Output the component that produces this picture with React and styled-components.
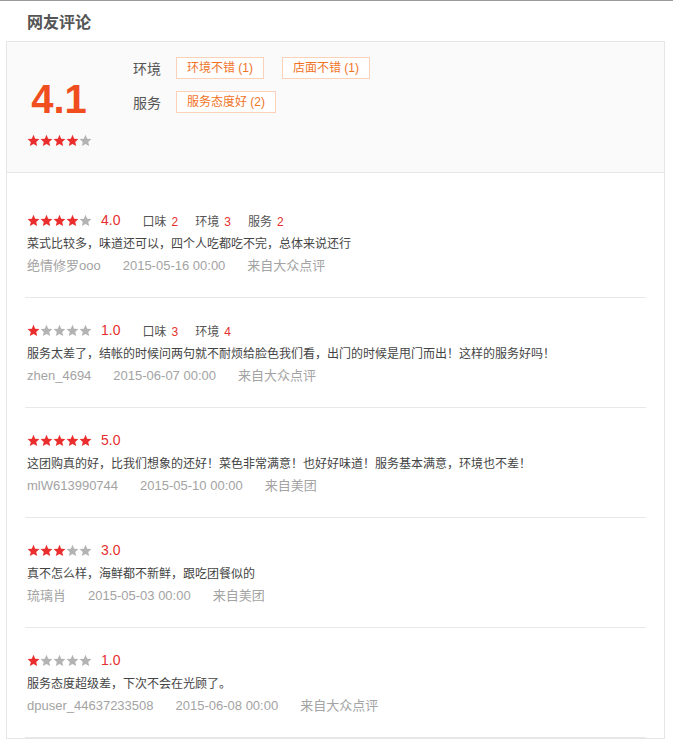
import React from "react";
import styled, { createGlobalStyle } from "styled-components";

const Global = createGlobalStyle`
  html, body { margin: 0; padding: 0; background: #fff; }
  body {
    font-family: "Liberation Sans", "Noto Sans CJK SC", Arial, sans-serif;
    color: #333;
  }
`;

const Page = styled.div`
  border-top: 1px solid #9a9a9a;
  padding: 0 8px 40px 6px;
`;

const Title = styled.h2`
  margin: 0;
  height: 40px;
  line-height: 40px;
  padding-left: 21px;
  font-size: 16px;
  font-weight: bold;
  color: #555;
  font-family: "Noto Sans CJK SC", sans-serif;
`;

const Card = styled.div`
  border: 1px solid #e6e6e6;
  background: #fff;
`;

const Summary = styled.div`
  display: flex;
  height: 130px;
  background: #fafafa;
  border-bottom: 1px solid #e8e8e8;
`;

const ScoreBox = styled.div`
  width: 104px;
  display: flex;
  flex-direction: column;
  align-items: center;
  padding-top: 34px;
  box-sizing: border-box;
`;

const BigScore = styled.div`
  font-size: 40px;
  line-height: 46px;
  font-weight: bold;
  color: #f04e1f;
  font-family: "Liberation Sans", Arial, sans-serif;
`;

const SummaryStars = styled.div`
  margin-top: 12px;
  display: flex;
`;

const Tags = styled.div`
  display: flex;
  flex-direction: column;
  gap: 12px;
  padding: 15px 0 0 22px;
`;

const TagRow = styled.div`
  display: flex;
  align-items: center;
  height: 22px;
`;

const TagLabel = styled.span`
  width: 43px;
  font-size: 14px;
  color: #555;
  font-family: "Noto Sans CJK SC", sans-serif;
`;

const Tag = styled.span`
  box-sizing: border-box;
  height: 22px;
  line-height: 20px;
  padding: 0 10px;
  margin-right: 18px;
  border: 1px solid #fbd2b8;
  font-size: 12px;
  color: #f0731f;
  background: #fff;
`;

const List = styled.div`
  margin: 0 18px;
  padding-top: 15px;
`;

const Item = styled.div`
  padding: 20px 2px 21px;
  border-bottom: 1px solid #e8e8e8;
`;

const RatingRow = styled.div`
  display: flex;
  align-items: center;
  height: 24px;
`;

const Stars = styled.span`
  display: flex;
`;

const Rate = styled.span`
  margin-left: 9px;
  font-size: 14px;
  color: #e62f2f;
  font-family: "Liberation Sans", Arial, sans-serif;
`;

const SubScores = styled.span`
  display: flex;
  gap: 17px;
  margin-left: 22px;
  font-size: 12px;
`;

const Sub = styled.span`
  color: #555;
  b {
    font-weight: normal;
    color: #e62f2f;
    margin-left: 5px;
  }
`;

const Text = styled.div`
  font-size: 12px;
  line-height: 24px;
  color: #444;
`;

const Meta = styled.div`
  display: flex;
  gap: 22px;
  font-size: 13px;
  line-height: 20px;
  color: #a3a3a3;
`;

const Star = ({ on }) => (
  <svg width="13" height="13" viewBox="0 0 24 24">
    <path
      d="M12 1.5l3.1 7.2 7.8.7-5.9 5.2 1.8 7.7L12 18.3l-6.8 4 1.8-7.7L1.1 9.4l7.8-.7z"
      fill={on ? "#ea2e2e" : "#b3b3b3"}
    />
  </svg>
);

const StarGroup = ({ n }) => (
  <Stars>
    {[0, 1, 2, 3, 4].map((i) => (
      <Star key={i} on={i < n} />
    ))}
  </Stars>
);

const reviews = [
  {
    rate: 4,
    subs: [["口味", 2], ["环境", 3], ["服务", 2]],
    text: "菜式比较多，味道还可以，四个人吃都吃不完，总体来说还行",
    user: "绝情修罗ooo",
    date: "2015-05-16 00:00",
    src: "来自大众点评",
  },
  {
    rate: 1,
    subs: [["口味", 3], ["环境", 4]],
    text: "服务太差了，结帐的时候问两句就不耐烦给脸色我们看，出门的时候是甩门而出！这样的服务好吗！",
    user: "zhen_4694",
    date: "2015-06-07 00:00",
    src: "来自大众点评",
  },
  {
    rate: 5,
    subs: [],
    text: "这团购真的好，比我们想象的还好！菜色非常满意！也好好味道！服务基本满意，环境也不差！",
    user: "mlW613990744",
    date: "2015-05-10 00:00",
    src: "来自美团",
  },
  {
    rate: 3,
    subs: [],
    text: "真不怎么样，海鲜都不新鲜，跟吃团餐似的",
    user: "琉璃肖",
    date: "2015-05-03 00:00",
    src: "来自美团",
  },
  {
    rate: 1,
    subs: [],
    text: "服务态度超级差，下次不会在光顾了。",
    user: "dpuser_44637233508",
    date: "2015-06-08 00:00",
    src: "来自大众点评",
  },
];

export default function App() {
  return (
    <>
      <Global />
      <Page>
        <Title>网友评论</Title>
        <Card>
          <Summary>
            <ScoreBox>
              <BigScore>4.1</BigScore>
              <SummaryStars>
                <StarGroup n={4} />
              </SummaryStars>
            </ScoreBox>
            <Tags>
              <TagRow>
                <TagLabel>环境</TagLabel>
                <Tag>环境不错 (1)</Tag>
                <Tag>店面不错 (1)</Tag>
              </TagRow>
              <TagRow>
                <TagLabel>服务</TagLabel>
                <Tag>服务态度好 (2)</Tag>
              </TagRow>
            </Tags>
          </Summary>
          <List>
            {reviews.map((r, i) => (
              <Item key={i}>
                <RatingRow>
                  <StarGroup n={r.rate} />
                  <Rate>{r.rate.toFixed(1)}</Rate>
                  {r.subs.length > 0 && (
                    <SubScores>
                      {r.subs.map(([k, v]) => (
                        <Sub key={k}>
                          {k}
                          <b>{v}</b>
                        </Sub>
                      ))}
                    </SubScores>
                  )}
                </RatingRow>
                <Text>{r.text}</Text>
                <Meta>
                  <span>{r.user}</span>
                  <span>{r.date}</span>
                  <span>{r.src}</span>
                </Meta>
              </Item>
            ))}
          </List>
        </Card>
      </Page>
    </>
  );
}
